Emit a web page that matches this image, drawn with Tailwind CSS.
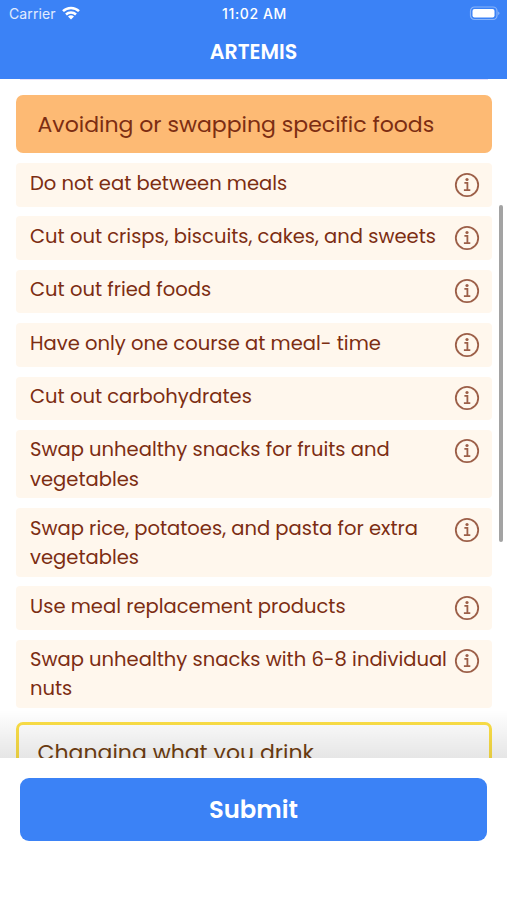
<!DOCTYPE html>
<html lang="en">
  <head>
    <meta charset="UTF-8" />
    <meta name="viewport" content="width=device-width, initial-scale=1.0" />
    <title>ARTEMIS</title>
    <script src="https://cdn.jsdelivr.net/npm/@tailwindcss/browser@4"></script>
  </head>
  <body class="bg-white font-[Poppins,Inter,sans-serif]">
    <svg class="hidden">
      <symbol id="info" viewBox="0 0 26 26">
        <g fill="none" stroke="currentColor">
          <circle cx="13" cy="13" r="11.2" stroke-width="1.8" />
          <path d="M10.4 10.9h3v7.2M9.9 18.2h6.4" stroke-width="1.8" />
        </g>
        <circle cx="13" cy="7.5" r="1.6" fill="currentColor" />
      </symbol>
    </svg>

    <div class="relative flex h-[900px] w-[507px] flex-col overflow-hidden">
      <header class="h-[79px] shrink-0 bg-[#3b82f6] text-white">
        <div class="grid h-7 grid-cols-3 items-center pr-[7px] pl-[9px] font-[Inter,sans-serif] text-[14px] leading-7">
          <div class="flex items-center gap-[6px]">
            <span class="tracking-[0.1px] text-white/85">Carrier</span>
            <svg class="-mt-[2px] h-[14px] w-[18px]" viewBox="0 0 18 14" fill="none" stroke="white" stroke-width="2.5">
              <path d="M1 5.2a11.4 11.4 0 0 1 16 0M4 8.5a7.2 7.2 0 0 1 10 0" />
              <path d="M9 13.6L6 10.6a4.3 4.3 0 0 1 6 0z" fill="white" stroke="none" />
            </svg>
          </div>
          <span class="text-center font-medium tracking-[0.6px] whitespace-nowrap">11:02 AM</span>
          <svg class="-mt-[2px] h-[15px] w-[31px] justify-self-end" viewBox="0 0 31 15">
            <rect x="1.5" y="1" width="26.5" height="12.5" rx="4" fill="none" stroke="white" stroke-width="1.2" stroke-opacity=".4" />
            <rect x="3.5" y="3" width="22" height="8.5" rx="2" fill="white" />
            <path d="M29.3 5.5c1.5.7 1.5 2.9 0 3.6z" fill="white" fill-opacity=".5" />
          </svg>
        </div>
        <h1 class="pt-[9px] text-center text-[20.6px] leading-[30px] font-semibold">ARTEMIS</h1>
      </header>

      <main class="min-h-0 flex-1 overflow-hidden px-[15.5px] text-[19.55px] leading-[29.2px] text-[#7c2d12]">
        <div class="mx-1 h-px bg-[#e4defc]"></div>
        <h2 class="mt-[15px] mb-[10px] flex h-[58px] items-center rounded-[7px] bg-[#fdba74] pt-px pl-[22px] text-[22px]">
          Avoiding or swapping specific foods
        </h2>

        <ul class="flex flex-col gap-[9.7px] whitespace-nowrap">
          <li class="flex h-[43.7px] justify-between rounded bg-[#fff7ed] pt-[5.6px] pr-3 pl-[14.5px]">
            <p>Do not eat between meals</p>
            <svg class="mt-[3px] size-[26px] shrink-0 opacity-75"><use href="#info" /></svg>
          </li>
          <li class="flex h-[43.7px] justify-between rounded bg-[#fff7ed] pt-[5.6px] pr-3 pl-[14.5px]">
            <p>Cut out crisps, biscuits, cakes, and sweets</p>
            <svg class="mt-[3px] size-[26px] shrink-0 opacity-75"><use href="#info" /></svg>
          </li>
          <li class="flex h-[43.7px] justify-between rounded bg-[#fff7ed] pt-[5.6px] pr-3 pl-[14.5px]">
            <p>Cut out fried foods</p>
            <svg class="mt-[3px] size-[26px] shrink-0 opacity-75"><use href="#info" /></svg>
          </li>
          <li class="flex h-[43.7px] justify-between rounded bg-[#fff7ed] pt-[5.6px] pr-3 pl-[14.5px]">
            <p>Have only one course at meal- time</p>
            <svg class="mt-[3px] size-[26px] shrink-0 opacity-75"><use href="#info" /></svg>
          </li>
          <li class="flex h-[43.7px] justify-between rounded bg-[#fff7ed] pt-[5.6px] pr-3 pl-[14.5px]">
            <p>Cut out carbohydrates</p>
            <svg class="mt-[3px] size-[26px] shrink-0 opacity-75"><use href="#info" /></svg>
          </li>
          <li class="flex h-[68.5px] justify-between rounded bg-[#fff7ed] pt-[5.6px] pr-3 pl-[14.5px]">
            <p>Swap unhealthy snacks for fruits and<br />vegetables</p>
            <svg class="mt-[3px] size-[26px] shrink-0 opacity-75"><use href="#info" /></svg>
          </li>
          <li class="flex h-[68.5px] justify-between rounded bg-[#fff7ed] pt-[5.6px] pr-3 pl-[14.5px]">
            <p>Swap rice, potatoes, and pasta for extra<br />vegetables</p>
            <svg class="mt-[3px] size-[26px] shrink-0 opacity-75"><use href="#info" /></svg>
          </li>
          <li class="flex h-[43.7px] justify-between rounded bg-[#fff7ed] pt-[5.6px] pr-3 pl-[14.5px]">
            <p>Use meal replacement products</p>
            <svg class="mt-[3px] size-[26px] shrink-0 opacity-75"><use href="#info" /></svg>
          </li>
          <li class="flex h-[68.5px] justify-between rounded bg-[#fff7ed] pt-[5.6px] pr-3 pl-[14.5px]">
            <p>Swap unhealthy snacks with 6-8 individual<br />nuts</p>
            <svg class="mt-[3px] size-[26px] shrink-0 opacity-75"><use href="#info" /></svg>
          </li>
        </ul>

        <h2 class="mt-[14px] flex h-[58px] items-center rounded-[7px] border-3 border-[#fde047] pt-[2px] pl-[19px] text-[22px] text-[#713f12]">
          Changing what you drink
        </h2>
      </main>

      <!-- scroll indicator -->
      <div class="absolute top-[205px] right-1 h-[337px] w-1 rounded-full bg-[#a3a3a3]"></div>

      <footer class="relative h-[142px] shrink-0 bg-white px-5 pt-5">
        <div class="absolute inset-x-0 bottom-full h-12 bg-linear-to-t from-black/10 to-transparent"></div>
        <button class="h-[63px] w-full rounded-[9px] bg-[#3b82f6] pt-[2px] text-[24.3px] font-semibold text-white">
          Submit
        </button>
      </footer>
    </div>
  </body>
</html>
